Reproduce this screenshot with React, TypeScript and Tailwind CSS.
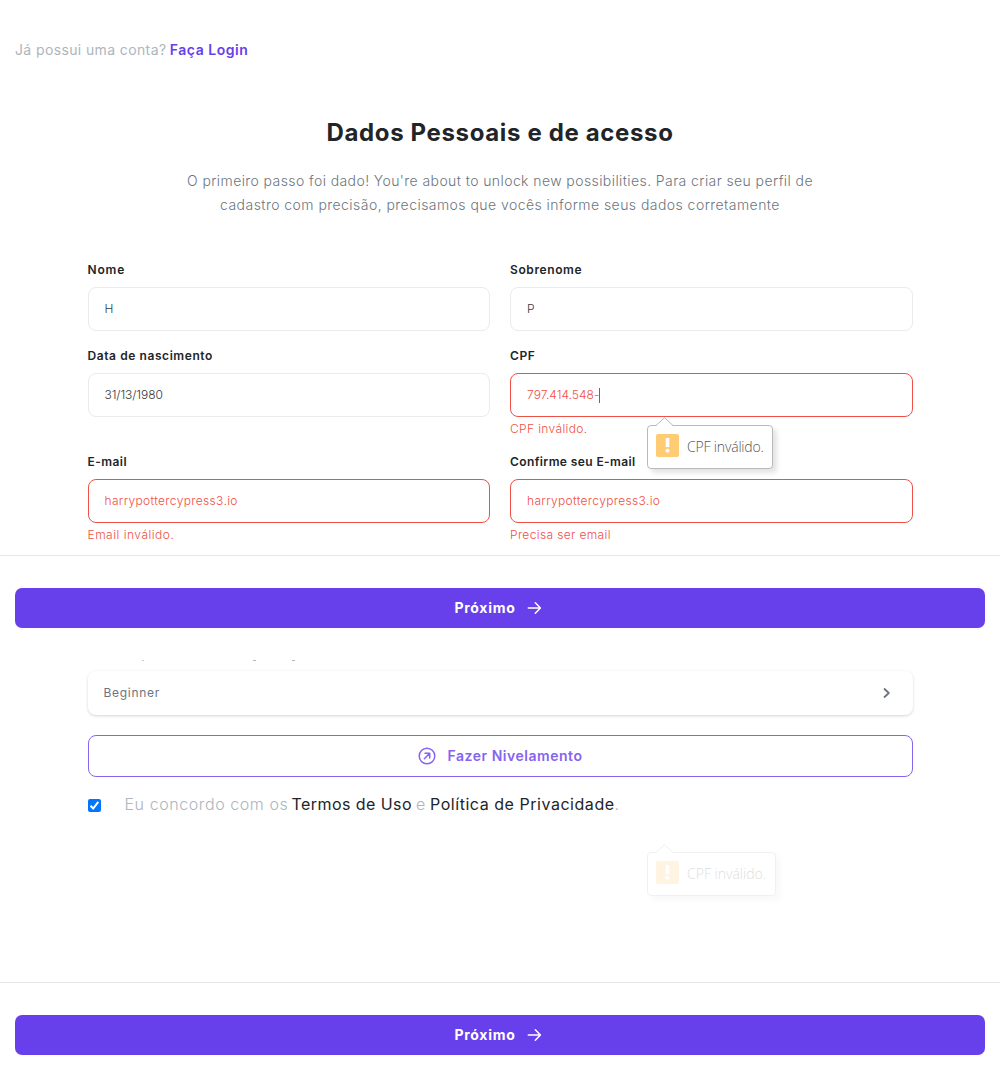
import type { ReactNode } from 'react';

function Field({
  label,
  labelClass,
  value,
  valueClass,
  error,
  errorClass = '',
  caret = false,
}: {
  label: string;
  labelClass: string;
  value: string;
  valueClass: string;
  error?: string;
  errorClass?: string;
  caret?: boolean;
}) {
  return (
    <div className="w-[402.5px] shrink-0">
      <div className={'h-[27px] pt-px whitespace-nowrap text-[12px] leading-[18px] font-semibold text-[#212529] ' + labelClass}>{label}</div>
      <div
        className={
          'flex h-[44px] items-center rounded-[8px] border px-4 text-[12px] ' +
          (error ? 'border-[#ee5048] text-[#ee5048]' : 'border-[#e9ebed] text-[#343a40]')
        }
      >
        <span className={'whitespace-nowrap font-light ' + valueClass}>{value}</span>
        {caret && <span className="h-[15px] w-px bg-[#dc3545]" />}
      </div>
      {error && (
        <div className={'mt-[3px] h-[18px] whitespace-nowrap text-[12px] leading-[18px] font-light text-[#ee5048] ' + errorClass}>{error}</div>
      )}
    </div>
  );
}

function Tooltip({ className, textClass }: { className: string; textClass: string }) {
  return (
    <div className={'absolute left-[647px] h-[44px] ' + className}>
      <div className="flex h-full items-center rounded-[4px] border border-[#b9b9b9] bg-white pb-[3px] pl-2 shadow-[4px_4px_5px_rgba(0,0,0,0.11)]">
        <div className="flex h-[23px] w-[23px] shrink-0 items-center justify-center rounded-[2px] bg-[#ffcb73]">
          <svg width="5" height="15" viewBox="0 0 5 15" fill="white">
            <path d="M.7 0h3.6v9H.7z" />
            <circle cx="2.5" cy="12.8" r="2" />
          </svg>
        </div>
        <span className={"ml-2 pt-px whitespace-nowrap font-['Open_Sans'] text-[14px] font-light text-[#555] " + textClass}>CPF inválido.</span>
      </div>
      <svg className="absolute -top-[8px] left-[8px]" width="20" height="10" viewBox="0 0 20 10">
        <path d="M1 9 9.5 .7 18 9v1H1z" fill="white" />
        <path d="M1 8.5 9.5 .7 18 8.5" fill="none" stroke="#b9b9b9" />
      </svg>
    </div>
  );
}

function Footer({ children }: { children?: ReactNode }) {
  return (
    <footer className="h-[105px] shrink-0 border-t border-[#e7e7e8] px-[15px] pt-8">
      <button className="flex h-[40px] w-full items-center justify-center rounded-[7px] bg-[#6840eb] text-[14px] font-bold text-white">
        <span className="pb-px tracking-[0.7px]">Próximo</span>
        <svg className="mr-[3px] ml-[12px]" width="15" height="14" viewBox="0 0 15 14" fill="none" stroke="white" strokeWidth="1.5" strokeLinecap="round" strokeLinejoin="round">
          <path d="M1.3 7h12M8.3 1.8 13.4 7l-5.1 5.2" />
        </svg>
      </button>
      {children}
    </footer>
  );
}

export default function App() {
  return (
    <div className="relative flex h-[1087px] w-[1000px] flex-col overflow-hidden bg-white font-['Inter',sans-serif]">
      <section className="flex h-[660px] shrink-0 flex-col">
        <div className="h-[119px] shrink-0 px-[15px] pt-[40px] text-[14px] leading-[20px] whitespace-nowrap">
          <span className="tracking-[0.38px] text-[#adb5bd]">Já possui uma conta? </span>
          <span className="-ml-px font-semibold tracking-[0.54px] text-[#6840eb]">Faça Login</span>
        </div>
        <h1 className="text-center text-[24px] leading-[28px] font-bold tracking-[0.64px] text-[#212529]">Dados Pessoais e de acesso</h1>
        <p className="mt-[22px] text-center text-[14px] leading-[24px] font-light text-[#6c757d]">
          <span className="block tracking-[0.41px]">O primeiro passo foi dado! You're about to unlock new possibilities. Para criar seu perfil de</span>
          <span className="block tracking-[0.45px]">cadastro com precisão, precisamos que vocês informe seus dados corretamente</span>
        </p>
        <form className="flex flex-1 flex-col px-[87.5px] pt-[43px]">
          <div className="flex h-[86px] shrink-0 gap-[20px]">
            <Field label="Nome" labelClass="tracking-[0.85px]" value="H" valueClass="" />
            <Field label="Sobrenome" labelClass="tracking-[0.6px]" value="P" valueClass="" />
          </div>
          <div className="flex h-[106px] shrink-0 gap-[20px]">
            <Field label="Data de nascimento" labelClass="tracking-[0.58px]" value="31/13/1980" valueClass="tracking-[-0.08px]" />
            <Field label="CPF" labelClass="tracking-[0.6px]" value="797.414.548-" valueClass="tracking-[0.03px]" error="CPF inválido." errorClass="tracking-[0.36px]" caret />
          </div>
          <div className="flex shrink-0 gap-[20px]">
            <Field label="E-mail" labelClass="tracking-[0.45px]" value="harrypottercypress3.io" valueClass="tracking-[0.35px]" error="Email inválido." errorClass="tracking-[0.5px]" />
            <Field label="Confirme seu E-mail" labelClass="tracking-[0.4px]" value="harrypottercypress3.io" valueClass="tracking-[0.35px]" error="Precisa ser email" errorClass="tracking-[0.36px]" />
          </div>
        </form>
        <Footer />
      </section>

      <section className="flex h-[427px] shrink-0 flex-col">
        <div className="flex flex-1 flex-col px-[87.5px]">
          <div className="flex h-[11px] shrink-0 items-start">
            <span className="ml-[54px] h-px w-[2px] bg-[#c8cacc]" />
            <span className="ml-[109px] h-px w-[3px] bg-[#b3b5b7]" />
            <span className="ml-[36px] h-px w-[3px] bg-[#b3b5b7]" />
          </div>
          <div className="flex h-[44px] shrink-0 items-center justify-between rounded-[8px] bg-white pr-[22px] pl-[16px] text-[12px] text-[#6c757d] shadow-[0_1px_3px_rgba(0,0,0,0.17)]">
            <span className="tracking-[0.7px]">Beginner</span>
            <svg width="9" height="12" viewBox="0 0 9 12" fill="none" stroke="#6c757d" strokeWidth="1.8" strokeLinejoin="round">
              <path d="m2 1.5 4.8 4.5L2 10.5" />
            </svg>
          </div>
          <button className="mt-[20px] flex h-[42px] shrink-0 items-center justify-center rounded-[8px] border border-[#8664ee] text-[14px] font-semibold text-[#8664ee]">
            <svg className="mr-[12px]" width="18" height="18" viewBox="0 0 18 18" fill="none" stroke="#8664ee" strokeWidth="1.5" strokeLinecap="round" strokeLinejoin="round">
              <circle cx="9" cy="9" r="7.8" />
              <path d="m6.3 11.7 5.2-5.2M7 6.3h4.7V11" />
            </svg>
            <span className="pb-px tracking-[0.52px]">Fazer Nivelamento</span>
          </button>
          <div className="mt-[15px] flex h-[25px] shrink-0 items-start text-[16px] leading-[24px] whitespace-nowrap">
            <span className="mt-[6.5px] flex h-[13px] w-[13px] shrink-0 items-center justify-center rounded-[2px] bg-[#0075ff]">
              <svg width="11" height="11" viewBox="0 0 11 11" fill="none" stroke="white" strokeWidth="2">
                <path d="m1.5 5.8 2.7 2.7 5.1-6.6" />
              </svg>
            </span>
            <span className="ml-[24px] w-[167px] font-light tracking-[0.58px] text-[#adb5bd]">Eu concordo com os</span>
            <span className="w-[124.5px] tracking-[0.44px] text-[#212529]">Termos de Uso</span>
            <span className="w-[14px] font-light text-[#adb5bd]">e</span>
            <span className="tracking-[0.54px] text-[#212529]">Política de Privacidade</span>
            <span className="font-light text-[#adb5bd]">.</span>
          </div>
        </div>
        <Footer />
      </section>

      <Tooltip className="top-[425px] w-[126px]" textClass="tracking-[-0.18px]" />
      <Tooltip className="top-[852px] w-[129px] opacity-20" textClass="tracking-[0px]" />
    </div>
  );
}
